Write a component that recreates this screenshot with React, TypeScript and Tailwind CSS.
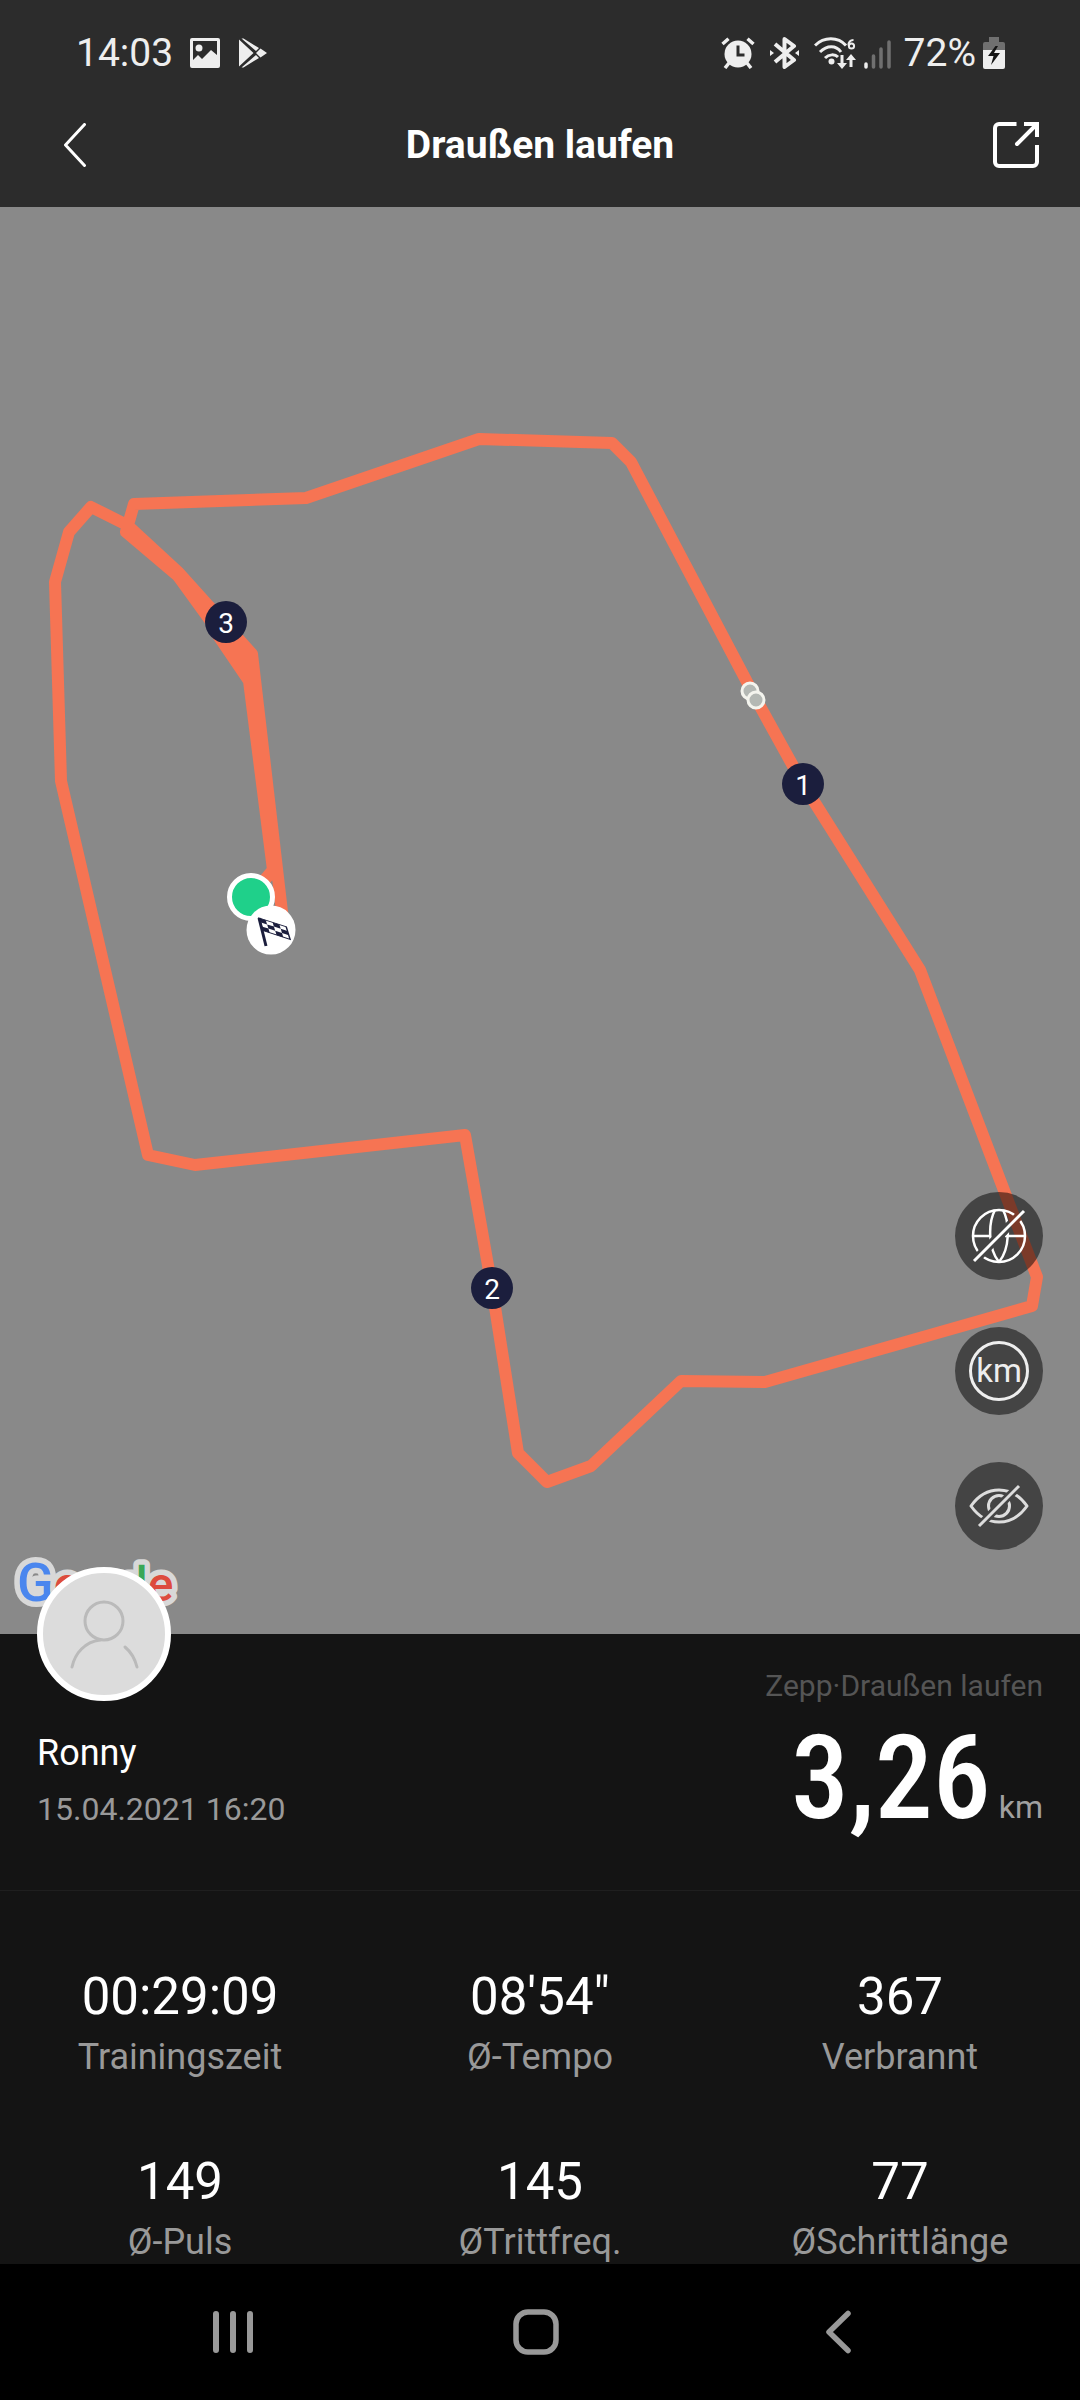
import React from 'react';

interface Stat {
  value: string;
  label: string;
}

interface KmMarker {
  km: number;
  x: number;
  y: number;
}

const stats: Stat[] = [
  { value: '00:29:09', label: 'Trainingszeit' },
  { value: '08\'54"', label: 'Ø-Tempo' },
  { value: '367', label: 'Verbrannt' },
  { value: '149', label: 'Ø-Puls' },
  { value: '145', label: 'ØTrittfreq.' },
  { value: '77', label: 'ØSchrittlänge' },
];

// Track in map units, start to finish
const track =
  '251,689 273,663 249,474 215,424 250,459 215,420 178,369 126,325 134,297 306,291 479,232 612,236 631,255 756,492 803,577 920,763 1037,1070 1032,1099 765,1175 681,1174 591,1259 547,1275 518,1246 492,1081 465,928 195,958 148,948 61,574 55,375 69,325 91,300 127,318 179,366 252,447 284,722';

const kmMarkers: KmMarker[] = [
  { km: 1, x: 803, y: 577 },
  { km: 2, x: 492, y: 1081 },
  { km: 3, x: 226, y: 415 },
];

function StatusBar() {
  return (
    <div className="flex h-[106px] items-center justify-between pl-[76px] pr-[75px] text-[#eeeeee]">
      <div className="flex items-center">
        <span className="text-[39px] leading-[44px]">14:03</span>
        <svg className="ml-[17px] h-[30px] w-[30px]" viewBox="0 0 30 30" aria-hidden="true">
          <path
            fill="currentColor"
            fillRule="evenodd"
            d="M2 0h26a2 2 0 0 1 2 2v26a2 2 0 0 1-2 2H2a2 2 0 0 1-2-2V2a2 2 0 0 1 2-2Zm1 3v19l5-5 4 4 9-9 6 5V3H3Zm6 3.500a3.500 3.500 0 1 1 0 7 3.500 3.500 0 0 1 0-7Z"
          />
        </svg>
        <svg className="ml-[19px] h-[30px] w-[28px]" viewBox="0 0 28 30" aria-hidden="true">
          <path
            fill="currentColor"
            d="M0 1.500v27L14.500 15 0 1.500ZM2.500 0.500 17 13l3-3L4.500 0.500Zm0 29L17 17l3 3L4.500 29.500ZM21.500 10.500 17 15l4.500 4.500L28 15Z"
          />
        </svg>
      </div>

      <div className="flex items-center">
        {/* Alarm */}
        <svg className="h-8 w-[34px]" viewBox="0 0 34 32" fill="none" stroke="currentColor" aria-hidden="true">
          <circle cx="17" cy="17" r="13.500" fill="currentColor" stroke="none" />
          <path d="M1.500 7 7.500 1.800M32.500 7 26.500 1.800" strokeWidth="3.500" />
          <path d="M8 26 4 31M26 26l4 5" strokeWidth="3.500" />
          <path d="M17 8.500V18h6.500" stroke="#2c2c2c" strokeWidth="3" />
        </svg>
        {/* Bluetooth */}
        <svg className="ml-[15px] h-8 w-[29px]" viewBox="0 0 29 32" fill="none" stroke="currentColor" aria-hidden="true">
          <path d="m5 7 19 16-9.500 7V2L24 9 5 25" strokeWidth="4" strokeLinejoin="round" />
          <path d="m0 13 4 3-4 3ZM29 13l-4 3 4 3Z" fill="currentColor" stroke="none" />
        </svg>
        {/* Wifi with transfer arrows */}
        <svg className="ml-[15px] h-8 w-[42px]" viewBox="0 0 42 32" fill="none" stroke="currentColor" aria-hidden="true">
          <path d="M1 8.500c9-9 23-9 31 0M6 15c7-7 16-7 21 0M11 21c4-4 10-4 13-1" strokeWidth="3" />
          <circle cx="17.500" cy="24.500" r="3" fill="currentColor" stroke="none" />
          <path d="M28 18v10M37 30V20" strokeWidth="3" />
          <path d="m23 26 5 6 5-6ZM32 23l5-6 5 6Z" fill="currentColor" stroke="none" />
          <path d="M39.500 3c-4 0-5 3-5 5.500" strokeWidth="2" />
          <circle cx="37.500" cy="9" r="2.600" strokeWidth="2" />
        </svg>
        {/* Signal */}
        <svg className="ml-2 h-8 w-[27px]" viewBox="0 0 27 32" stroke="#707070" strokeWidth="3.500" strokeLinecap="round" aria-hidden="true">
          <path d="M2 27v3" stroke="#eeeeee" />
          <path d="M9.500 19v11M17 12v18M25 5v25" />
        </svg>
        <span className="ml-[13px] text-[39px] leading-[44px]">72%</span>
        {/* Battery, charging */}
        <svg className="ml-[7px] h-8 w-[22px]" viewBox="0 0 22 32" aria-hidden="true">
          <path d="M6 0h10v5h4a2 2 0 0 1 2 2v6H0V7a2 2 0 0 1 2-2h4Z" fill="#707070" />
          <path d="M0 13h22v17a2 2 0 0 1-2 2H2a2 2 0 0 1-2-2Z" fill="#eeeeee" />
          <path d="M12.500 9 5 19h5.500L8 28l9-12h-6l4-7Z" fill="#141414" />
        </svg>
      </div>
    </div>
  );
}

function Header() {
  return (
    <header className="bg-[#2c2c2c]">
      <StatusBar />
      <div className="grid h-[101px] grid-cols-[1fr_auto_1fr] items-center px-[41px] pb-6">
        <button type="button" className="justify-self-start pl-[22px]" aria-label="Zurück">
          <svg className="h-[44px] w-[46px]" viewBox="0 0 46 44" fill="none" stroke="white" strokeWidth="3" strokeLinecap="round" strokeLinejoin="round">
            <path d="M21.500 1.500 2.500 22l19 20.500" />
          </svg>
        </button>
        <h1 className="text-[39px] font-bold leading-[48px] text-white">Draußen laufen</h1>
        <button type="button" className="justify-self-end" aria-label="Teilen">
          <svg className="h-[46px] w-[46px]" viewBox="0 0 46 46" fill="none" stroke="white" strokeWidth="4">
            <path d="M23.500 2H6a4 4 0 0 0-4 4v34a4 4 0 0 0 4 4h34a4 4 0 0 0 4-4V23" />
            <path d="M31 2h13v13" />
            <path d="M24 22 44 2" strokeLinecap="round" />
          </svg>
        </button>
      </div>
    </header>
  );
}

function MapControls() {
  const button = 'flex h-[88px] w-[88px] items-center justify-center rounded-full bg-black/50 text-white';

  return (
    <div className="absolute bottom-[84px] right-[37px] flex flex-col gap-[47px]">
      <button type="button" className={button} aria-label="Karte ausblenden">
        <svg className="h-[60px] w-[60px]" viewBox="-30 -30 60 60" fill="none" stroke="currentColor" strokeWidth="2.500">
          <mask id="globe-cut" maskUnits="userSpaceOnUse" x="-30" y="-30" width="60" height="60">
            <rect x="-30" y="-30" width="60" height="60" fill="white" stroke="none" />
            <path d="M-30 30 30-30" stroke="black" strokeWidth="9" />
          </mask>
          <g mask="url(#globe-cut)">
            <circle r="26" />
            <path d="M-4-26c-7 13-7 39 4 52M4-26c7 13 7 39-4 52M-26 0h18M6 0h20" />
          </g>
          <path d="M-25 25 25-25" strokeWidth="3" />
        </svg>
      </button>
      <button type="button" className={button} aria-label="Kilometermarken">
        <span className="flex h-[60px] w-[60px] items-center justify-center rounded-full border-[3px] border-[#eeeeee] text-[33px] leading-[40px] text-[#eeeeee]">
          km
        </span>
      </button>
      <button type="button" className={button} aria-label="Strecke verbergen">
        <svg className="h-[60px] w-[60px]" viewBox="-30 -30 60 60" fill="none" stroke="#dddddd" strokeWidth="3">
          <mask id="eye-cut" maskUnits="userSpaceOnUse" x="-30" y="-30" width="60" height="60">
            <rect x="-30" y="-30" width="60" height="60" fill="white" stroke="none" />
            <path d="M-30 30 30-30" stroke="black" strokeWidth="8" />
          </mask>
          <g mask="url(#eye-cut)">
            <path d="M-28 0c7-10 17-16 28-16S21-10 28 0C21 10 11 16 0 16S-21 10-28 0Z" strokeLinejoin="round" />
            <circle r="10.500" />
          </g>
          <path d="M-20 20 20-20" />
        </svg>
      </button>
    </div>
  );
}

function RouteMap() {
  return (
    <section className="relative bg-[#898989]" aria-label="Strecke">
      <svg className="block w-full" viewBox="0 0 1080 1427">
        <polyline points={track} fill="none" stroke="#f67453" strokeWidth="12" strokeLinejoin="round" />

        {/* Pause points */}
        <g fill="#b4b8b4" stroke="#f4f4ee" strokeWidth="3">
          <circle cx="750" cy="484" r="8" />
          <circle cx="756" cy="493" r="8" />
        </g>

        {kmMarkers.map((marker) => (
          <g key={marker.km}>
            <circle cx={marker.x} cy={marker.y} r="21" fill="#1b1e3d" />
            <text x={marker.x} y={marker.y + 11} textAnchor="middle" fontSize="28" fill="white">
              {marker.km}
            </text>
          </g>
        ))}

        {/* Start */}
        <circle cx="251" cy="690" r="21.500" fill="#1fd08a" stroke="white" strokeWidth="5" />

        {/* Finish */}
        <circle cx="271" cy="723" r="24.500" fill="white" />
        <path d="m259 711 7 28" stroke="#1b1e3d" strokeWidth="3" />
        <g transform="matrix(6.8 2.2 1.3 4.2 259 711)" fill="#1b1e3d">
          <path d="M0 0h1v1H0ZM2 0h1v1H2ZM1 1h1v1H1ZM3 1h1v1H3ZM0 2h1v1H0ZM2 2h1v1H2Z" />
          <path d="M0 0h4v3H0Z" fill="none" stroke="#1b1e3d" strokeWidth="0.250" />
        </g>

        <text
          x="17"
          y="1394"
          fontSize="48"
          fontWeight="500"
          stroke="#d8d8d8"
          strokeWidth="11"
          strokeLinejoin="round"
          paintOrder="stroke"
        >
          <tspan fill="#4a86ee" fontSize="54">G</tspan>
          <tspan fill="#dd4b3e">o</tspan>
          <tspan fill="#f2b90c">o</tspan>
          <tspan fill="#4a86ee">g</tspan>
          <tspan fill="#3aa757">l</tspan>
          <tspan fill="#dd4b3e">e</tspan>
        </text>
      </svg>
      <MapControls />
    </section>
  );
}

function Summary() {
  return (
    <section className="flex items-start justify-between border-b border-[#1f1f1f] px-[37px] pb-[57px]">
      <div>
        <div className="relative z-10 -mt-[67px] h-[134px] w-[134px] rounded-full border-[6px] border-white bg-[#dcdcdc]">
          <svg viewBox="0 0 122 122" fill="none" stroke="#bababa" strokeWidth="3" strokeLinecap="round" aria-hidden="true">
            <circle cx="61" cy="48" r="19" />
            <path d="M57 67C42 69 32 80 29 94M82 74c6 5 10 12 12 20" />
          </svg>
        </div>
        <p className="mt-7 text-[36px] leading-[48px] text-white">Ronny</p>
        <p className="mt-2 text-[32px] leading-[48px] text-[#999999]">15.04.2021 16:20</p>
      </div>
      <div className="pt-8 text-right">
        <p className="text-[30px] leading-[40px] text-[#555555]">Zepp·Draußen laufen</p>
        <p className="mt-[22px] flex items-baseline justify-end gap-2">
          <span className="font-['Roboto_Condensed',Roboto,sans-serif] text-[116px] font-medium leading-[100px] text-white">
            3,26
          </span>
          <span className="text-[32px] leading-[40px] text-[#a0a0a0]">km</span>
        </p>
      </div>
    </section>
  );
}

function StatsGrid() {
  return (
    <dl className="grid grid-cols-3 gap-y-[73px] pt-[76px] text-center">
      {stats.map((stat) => (
        <div key={stat.label} className="flex flex-col-reverse gap-2">
          <dt className="text-[36px] leading-[44px] text-[#999999]">{stat.label}</dt>
          <dd className="text-[51px] leading-[60px] text-white">{stat.value}</dd>
        </div>
      ))}
    </dl>
  );
}

function NavigationBar() {
  return (
    <nav className="grid grid-cols-3 justify-items-center bg-black py-[45px] pl-[82px] pr-[90px] text-[#999999]">
      <button type="button" aria-label="Letzte Apps">
        <svg className="h-[46px] w-[46px]" viewBox="0 0 46 46" stroke="currentColor" strokeWidth="6" strokeLinecap="round">
          <path d="M6 5v36M23 5v36M40 5v36" />
        </svg>
      </button>
      <button type="button" aria-label="Startbildschirm">
        <svg className="h-[46px] w-[46px]" viewBox="0 0 46 46" fill="none" stroke="currentColor" strokeWidth="5.500">
          <rect x="3" y="3" width="40" height="40" rx="12" />
        </svg>
      </button>
      <button type="button" aria-label="Zurück">
        <svg className="h-[46px] w-[46px]" viewBox="0 0 46 46" fill="none" stroke="currentColor" strokeWidth="5.500" strokeLinecap="round" strokeLinejoin="round">
          <path d="M32 4.500 13 23l19 18.500" />
        </svg>
      </button>
    </nav>
  );
}

export default function App() {
  return (
    <div className="min-h-screen bg-[#141414] font-[Roboto,sans-serif]">
      <Header />
      <main>
        <RouteMap />
        <Summary />
        <StatsGrid />
      </main>
      <NavigationBar />
    </div>
  );
}
